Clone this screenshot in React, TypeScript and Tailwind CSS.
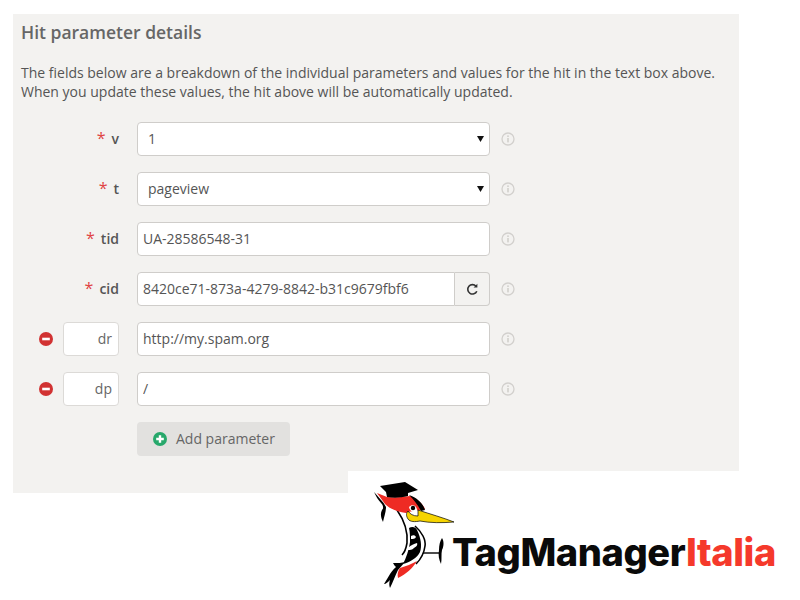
import { ReactNode } from 'react';

const fieldClass =
  'h-[34px] w-full rounded-[4px] border border-[#cfcdca] bg-white pl-[5px] pr-[6px] pb-[2px] text-[14px] text-[#555] outline-none';

const InfoIcon = () => (
  <svg width="14" height="14" viewBox="0 0 14 14" className="ml-[11px] shrink-0">
    <circle cx="7" cy="7" r="6" fill="none" stroke="#d2d0cd" strokeWidth="1.3" />
    <rect x="6.2" y="6" width="1.6" height="4.4" fill="#d2d0cd" />
    <rect x="6.2" y="3.4" width="1.6" height="1.6" fill="#d2d0cd" />
  </svg>
);

const RequiredLabel = ({ name }: { name: string }) => (
  <div className="flex w-[98px] shrink-0 items-center justify-end gap-[6px] pb-[2px] text-[14px] font-semibold text-[#555]">
    <span className="text-[16px] font-normal text-[#e04444]">*</span>
    <span>{name}</span>
  </div>
);

const RemovableLabel = ({ name }: { name: string }) => (
  <div className="flex w-[98px] shrink-0 items-center justify-end gap-[10px]">
    <svg width="14" height="14" viewBox="0 0 14 14">
      <circle cx="7" cy="7" r="7" fill="#d13232" />
      <rect x="3.2" y="5.7" width="7.6" height="2.6" fill="#fff" />
    </svg>
    <div className="flex h-[34px] w-[56px] items-center justify-end rounded-[4px] border border-[#dcdad7] bg-white pb-[2px] pr-[6px] text-[14px] text-[#666]">
      {name}
    </div>
  </div>
);

const Row = ({ label, children }: { label: ReactNode; children: ReactNode }) => (
  <div className="flex items-center">
    {label}
    <div className="ml-[18px] w-[353px] shrink-0">{children}</div>
    <InfoIcon />
  </div>
);

const SelectField = ({ value }: { value: string }) => (
  <div className="relative">
    <select defaultValue={value} className={`${fieldClass} appearance-none !pl-[10px]`}>
      <option>{value}</option>
    </select>
    <svg width="7" height="6" viewBox="0 0 7 6" className="absolute right-[6px] top-[14px]">
      <path d="M0 0H7L3.5 6Z" fill="#111" />
    </svg>
  </div>
);

const TextField = ({ value }: { value: string }) => (
  <input readOnly value={value} className={fieldClass} />
);

const Bird = () => (
  <svg width="120" height="125" viewBox="0 0 120 125" className="absolute left-[12px] top-[-1px]">
    {/* left arc of the back */}
    <path d="M37 40C44 50 48 62 47 73C46 79 45 82 42 85" fill="none" stroke="#000" strokeWidth="1.6" />
    {/* right arc of the chest */}
    <path d="M55 56C62 62 66 70 65 76C64 84 61 89 56 94" fill="none" stroke="#000" strokeWidth="1.6" />
    {/* black body with white stripes */}
    <path d="M49 58C52 56 56 57 57 60C61 68 62 76 60 82C57 88 50 92 43 94C46 88 49 80 50 72C50 67 50 62 49 58Z" fill="#000" />
    <path d="M48 78C51 75 54 74 57 73C58 75 56 77 54 78C52 80 50 80 48 80Z" fill="#fff" />
    <path d="M51 66C53 65 55 65 56 67C55 69 53 69 51 69Z" fill="#fff" />
    {/* perch */}
    <path d="M63 83H81" stroke="#000" strokeWidth="1.4" />
    <path d="M82 68C84 71 84 76 82 80C81 84 82 89 81 94C79 90 78 85 79 80C79 75 80 71 82 68Z" fill="#000" />
    {/* belly and tail */}
    <path d="M33 93C38 93 42 93 45 92L38 100C35 106 33 112 30 118C29 115 29 113 30 110C28 112 26 114 24 114C27 110 30 102 36 97C35 96 34 95 33 93Z" fill="#000" />
    <path d="M57 91C53 98 46 104 38 108C37 104 38 101 40 98C46 96 52 94 57 91Z" fill="#ee2b24" />
    {/* head */}
    <path d="M17 23L27 27C35 28 42 27 50 26C57 28 63 34 65 39C60 41 52 40 46 43C38 42 30 39 25 34Z" fill="#ee2b24" />
    <path d="M49 25C56 27 63 33 65 40L61 41C58 35 54 30 49 25Z" fill="#000" />
    <path d="M49 37C53 33 58 37 57 42C54 43 50 42 49 37Z" fill="#fff" />
    <circle cx="53" cy="38" r="2.2" fill="#000" />
    {/* beak and collar */}
    <path d="M58 40C70 44 84 48 94 52C82 53 70 53 60 51C55 52 50 52 48 49C46 46 46 43 48 41C50 44 53 46 58 46Z" fill="#f6d400" stroke="#000" strokeWidth="0.7" />
    {/* mortarboard */}
    <path d="M20 16L45 12L58 20L48 23L48 26C40 28 33 28 27 27L26 22Z" fill="#000" />
    {/* tassel */}
    <path d="M14 22C18 27 23 31 26 37C26 42 24 47 23 52C21 48 20 44 22 40C24 38 23 35 21 33C18 30 16 26 14 22Z" fill="#000" />
  </svg>
);

export default function App() {
  return (
    <div className="relative h-[600px] w-[800px] overflow-hidden bg-white font-['Open_Sans',sans-serif]">
      <div className="ml-[13px] mt-[14px] h-[479px] w-[726px] bg-[#f3f2f0] px-[8px]">
        <h2 className="pt-[6px] text-[17.5px] font-semibold leading-[24px] text-[#666]">
          Hit parameter details
        </h2>
        <p className="mt-[19px] text-[14px] leading-[19px] text-[#555]">
          The fields below are a breakdown of the individual parameters and values for the hit in the text box above.
          <br />
          When you update these values, the hit above will be automatically updated.
        </p>
        <div className="mt-[21px] flex flex-col gap-[16px]">
          <Row label={<RequiredLabel name="v" />}>
            <SelectField value="1" />
          </Row>
          <Row label={<RequiredLabel name="t" />}>
            <SelectField value="pageview" />
          </Row>
          <Row label={<RequiredLabel name="tid" />}>
            <TextField value="UA-28586548-31" />
          </Row>
          <Row label={<RequiredLabel name="cid" />}>
            <div className="flex">
              <input
                readOnly
                value="8420ce71-873a-4279-8842-b31c9679fbf6"
                className="h-[34px] min-w-0 flex-1 rounded-l-[4px] border border-[#cfcdca] bg-white pb-[2px] pl-[5px] pr-[6px] text-[14px] text-[#555] outline-none"
              />
              <button className="flex h-[34px] w-[35px] items-center justify-center rounded-r-[4px] border border-l-0 border-[#cfcdca] bg-[#f3f2f0]">
                <svg width="13" height="13" viewBox="0 0 13 13" fill="none" stroke="#333" strokeWidth="1.6">
                  <path d="M10.8 8.2A4.7 4.7 0 1 1 10 3.2" />
                  <path d="M11.4 0.8V4.6H7.6Z" fill="#333" stroke="none" />
                </svg>
              </button>
            </div>
          </Row>
          <Row label={<RemovableLabel name="dr" />}>
            <TextField value="http://my.spam.org" />
          </Row>
          <Row label={<RemovableLabel name="dp" />}>
            <TextField value="/" />
          </Row>
          <div className="ml-[116px]">
            <button className="flex h-[34px] w-[153px] items-center rounded-[4px] bg-[#e2e1df] pb-[2px] pl-[16px] text-[14px] text-[#666]">
              <svg width="14" height="14" viewBox="0 0 14 14" className="mr-[9px] mt-[2px]">
                <circle cx="7" cy="7" r="7" fill="#27a86b" />
                <path d="M5.8 3.2H8.2V5.8H10.8V8.2H8.2V10.8H5.8V8.2H3.2V5.8H5.8Z" fill="#fff" />
              </svg>
              Add parameter
            </button>
          </div>
        </div>
      </div>
      {/* logo block sits over the panel's lower corner */}
      <div className="absolute left-[348px] top-[471px] h-[129px] w-[452px] bg-white">
        <Bird />
        <div className="absolute left-[104px] top-[56px] whitespace-nowrap font-['Inter',sans-serif] text-[38px] font-extrabold leading-[50px] tracking-[-0.4px] text-[#0a0a0a]">
          TagManager<span className="text-[#f5392b]">Italia</span>
        </div>
      </div>
    </div>
  );
}
